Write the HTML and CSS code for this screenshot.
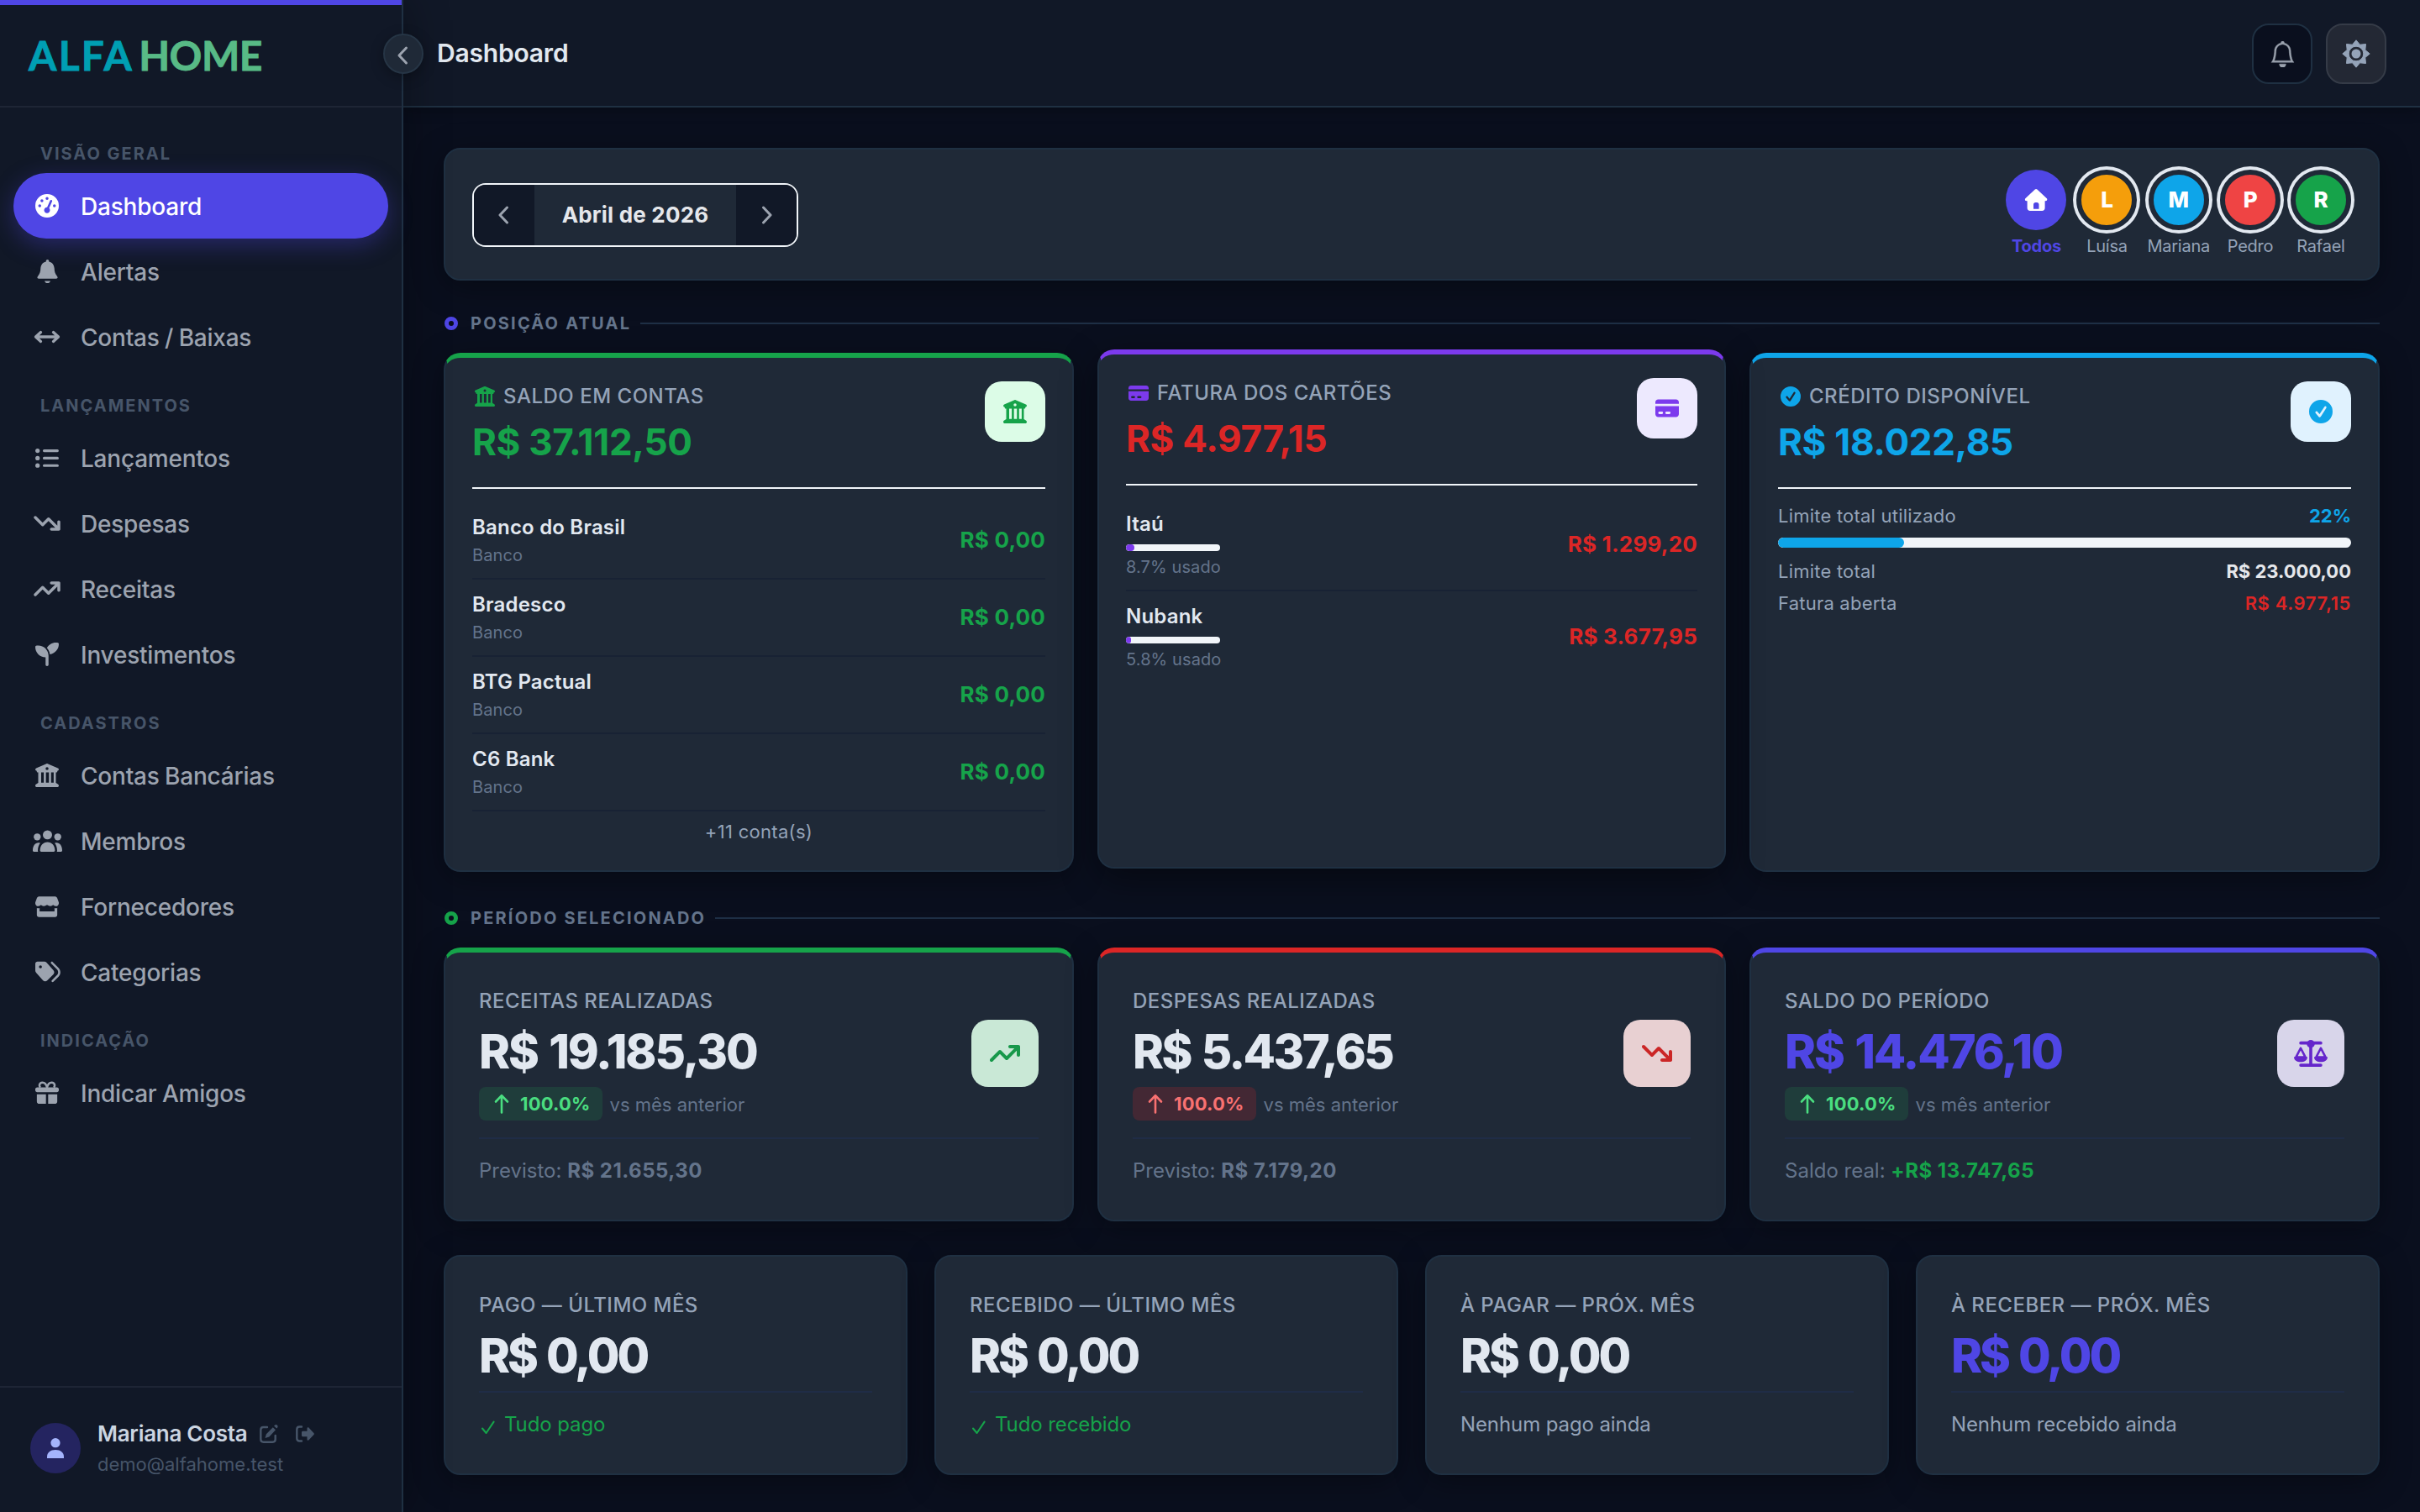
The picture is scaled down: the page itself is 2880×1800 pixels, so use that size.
FILE: index.html
```html
<!DOCTYPE html>
<html lang="pt-BR">
<head>
    <meta charset="UTF-8">
    <meta name="viewport" content="width=device-width, initial-scale=1.0">
    <title>Dashboard - AlfaHome</title>
    <link rel="stylesheet" href="styles.css">
</head>
<body>
    <!-- Icon sprite -->
    <svg class="sprite" xmlns="http://www.w3.org/2000/svg">
        <symbol id="i-gauge" viewBox="0 0 512 512"><path d="M0 256a256 256 0 1 1 512 0A256 256 0 1 1 0 256zM288 96a32 32 0 1 0 -64 0 32 32 0 1 0 64 0zM256 416c35.3 0 64-28.7 64-64c0-17.4-6.9-33.1-18.1-44.6L366 161.7c5.3-12.1-.2-26.3-12.3-31.6s-26.3 .2-31.6 12.3L257.9 288c-.6 0-1.3 0-1.9 0c-35.3 0-64 28.7-64 64s28.7 64 64 64zM176 144a32 32 0 1 0 -64 0 32 32 0 1 0 64 0zM96 288a32 32 0 1 0 0-64 32 32 0 1 0 0 64zm352-32a32 32 0 1 0 -64 0 32 32 0 1 0 64 0z"/></symbol>
        <symbol id="i-bell" viewBox="0 0 448 512"><path d="M224 0c-17.7 0-32 14.3-32 32V45C119 60 78 120 74 194c-2 70-14 106-52 158l-14 22C-6 394 8 416 32 416H416c24 0 38-22 24-42l-14-22c-38-52-50-88-52-158C370 120 329 60 256 45V32c0-17.7-14.3-32-32-32zM160 464c8 28 34 48 64 48s56-20 64-48z"/></symbol>
        <symbol id="i-leftright" viewBox="0 0 32 28"><path d="M3 14H29M8.500 8.500L2.500 14l6 5.500M23.500 8.500L29.500 14l-6 5.500" fill="none" stroke="currentColor" stroke-width="3.300" stroke-linecap="round" stroke-linejoin="round"/></symbol>
        <symbol id="i-list" viewBox="0 0 28 28"><g><circle cx="2.700" cy="5.600" r="2.600"/><circle cx="2.700" cy="14.400" r="2.600"/><circle cx="2.700" cy="23.200" r="2.600"/></g><path d="M10.500 5.600H26.400M10.500 14.400H26.400M10.500 23.200H26.400" stroke="currentColor" stroke-width="3.100" stroke-linecap="round"/></symbol>
        <symbol id="i-up" viewBox="0 0 576 512"><path d="M384 160c-17.700 0-32-14.300-32-32s14.300-32 32-32H544c17.700 0 32 14.300 32 32V288c0 17.700-14.300 32-32 32s-32-14.300-32-32V205.300L342.600 374.600c-12.500 12.500-32.800 12.500-45.300 0L192 269.300 54.600 406.600c-12.500 12.500-32.800 12.500-45.300 0s-12.500-32.800 0-45.300l160-160c12.500-12.500 32.800-12.500 45.300 0L320 306.700 466.700 160H384z"/></symbol>
        <symbol id="i-down" viewBox="0 0 576 512"><path transform="matrix(1 0 0 -1 0 512)" d="M384 160c-17.700 0-32-14.300-32-32s14.300-32 32-32H544c17.700 0 32 14.300 32 32V288c0 17.700-14.300 32-32 32s-32-14.300-32-32V205.300L342.600 374.600c-12.500 12.500-32.800 12.500-45.300 0L192 269.300 54.600 406.600c-12.500 12.500-32.800 12.500-45.300 0s-12.500-32.800 0-45.300l160-160c12.500-12.500 32.800-12.500 45.300 0L320 306.700 466.700 160H384z"/></symbol>
        <symbol id="i-seedling" viewBox="0 0 512 512"><path d="M512 32c0 113.600-84.600 207.500-194.200 222c-7.100-53.400-30.600-101.600-65.300-139.300C290.800 46.300 364 0 448 0h32c17.700 0 32 14.300 32 32zM0 96C0 78.300 14.300 64 32 64H64c123.700 0 224 100.300 224 224v32V480c0 17.700-14.300 32-32 32s-32-14.300-32-32V320C100.300 320 0 219.700 0 96z"/></symbol>
        <symbol id="i-bank" viewBox="0 0 512 512"><path d="M243.400 2.600l-224 96c-14 6-21.800 21-18.700 35.800S16.800 160 32 160v8c0 13.300 10.700 24 24 24H456c13.300 0 24-10.700 24-24v-8c15.200 0 28.300-10.700 31.300-25.600s-4.800-29.900-18.700-35.800l-224-96c-8-3.400-17.200-3.400-25.200 0zM128 192H64V420.300c-.6 .3-1.200 .7-1.800 1.100l-48 32c-11.700 7.800-17 22.400-12.900 35.900S17.900 512 32 512H480c14.100 0 26.500-9.200 30.600-22.700s-1.100-28.100-12.900-35.900l-48-32c-.6-.4-1.200-.7-1.800-1.100V192H400V416H344V192H296V416H232V192H184V416H128V192zM256 76a32 32 0 1 1 0 64 32 32 0 1 1 0-64z" fill-rule="evenodd"/></symbol>
        <symbol id="i-users" viewBox="0 0 640 512"><circle cx="320" cy="126" r="100"/><circle cx="97" cy="170" r="76"/><circle cx="543" cy="170" r="76"/><path d="M158 468c0-110 66-186 162-186s162 76 162 186c0 16-10 26-26 26H184c-16 0-26-10-26-26zM0 466C0 366 50 298 124 298c14 0 26 2 38 6-34 42-52 94-52 160 0 10 2 20 6 30H28c-16 0-28-12-28-28zM640 466c0-100-50-168-124-168-14 0-26 2-38 6 34 42 52 94 52 160 0 10-2 20-6 30h88c16 0 28-12 28-28z"/></symbol>
        <symbol id="i-store" viewBox="0 0 512 512"><path d="M90 40H422c24 0 44 12 54 32l32 88c16 48-16 92-62 92-24 0-44-10-58-26-30 32-82 34-132 0-50 34-102 32-132 0-14 16-34 26-58 26C20 252-12 208 4 160L36 72C46 52 66 40 90 40zM34 292c20 8 40 8 60 2V364H418V294c20 6 40 6 60-2V444c0 28-20 46-46 46H80c-26 0-46-18-46-46z"/></symbol>
        <symbol id="i-tags" viewBox="0 0 548 512"><path d="M378 39L505.800 168.400c52.400 53 52.400 138.200 0 191.200L393.800 472.900c-9.300 9.400-24.500 9.500-33.900 .2s-9.500-24.500-.2-33.900L471.600 325.900c33.900-34.300 33.900-89.400 0-123.700L343.900 72.900c-9.300-9.400-9.200-24.600 .2-33.900s24.600-9.200 33.900 .2zM0 229.500V80C0 53.500 21.500 32 48 32H197.500c17 0 33.300 6.700 45.300 18.700l150 168c25 25 25 65.500 0 90.500L259.300 442.700c-25 25-65.500 25-90.500 0l-150-168C6.700 262.700 0 246.500 0 229.500zM144 144a32 32 0 1 0 -64 0 32 32 0 1 0 64 0z"/></symbol>
        <symbol id="i-gift" viewBox="0 0 512 512"><path d="M256 140C240 70 200 32 156 32c-38 0-66 26-66 60 0 20 8 36 20 48M256 140C272 70 312 32 356 32c38 0 66 26 66 60 0 20-8 36-20 48" fill="none" stroke="currentColor" stroke-width="46"/><path d="M40 138H472c22 0 40 18 40 40v24c0 22-18 40-40 40H40c-22 0-40-18-40-40v-24c0-22 18-40 40-40zM34 288H232V494H86c-30 0-52-22-52-52zM280 288H478V442c0 30-22 52-52 52H280z"/></symbol>
        <symbol id="i-card" viewBox="0 0 512 512"><path d="M64 66H448c36 0 64 26 64 62v32H0V128c0-36 28-62 64-62zM0 208H512V384c0 36-28 62-64 62H64c-36 0-64-26-64-62zM88 330c-32 0-32 52 0 52h56c32 0 32-52 0-52zM242 330c-32 0-32 52 0 52h64c32 0 32-52 0-52z" fill-rule="evenodd"/></symbol>
        <symbol id="i-check" viewBox="0 0 512 512"><path fill-rule="evenodd" d="M256 512A256 256 0 1 0 256 0a256 256 0 1 0 0 512zM374 176L254 366c-10 16-32 18-44 4l-68-82c-20-26 16-56 38-32l48 56L334 150c18-26 56-2 40 26z"/></symbol>
        <symbol id="i-scale" viewBox="0 0 640 512"><g fill="none" stroke="currentColor" stroke-linecap="round" stroke-linejoin="round"><path d="M130 58H510M130 480H510" stroke-width="60"/><path d="M320 60V470" stroke-width="58" stroke-linecap="butt"/><path d="M128 156L38 330H218zM512 156L422 330H602z" stroke-width="42"/></g><circle cx="320" cy="76" r="76"/><path d="M0 322H256C256 386 198 420 128 420S0 386 0 322zM384 322H640C640 386 582 420 512 420S384 386 384 322z"/></symbol>
        <symbol id="i-home" viewBox="0 0 28 28"><path fill-rule="evenodd" d="M12.800 1.500c.8-.7 1.800-.7 2.600 0l11.200 10.600c1.400 1.300.6 3.200-1.200 3.200H24.600V23.600c0 2-1.400 3.400-3.400 3.400H7c-2 0-3.400-1.400-3.400-3.400V15.300H2.800C1 15.300.2 13.400 1.600 12.100zM11 24.800h6.500V19.600c0-1.500-1-2.500-2.500-2.500h-1.500c-1.500 0-2.500 1-2.500 2.500z"/></symbol>
        <symbol id="i-bell-o" viewBox="0 0 16 16"><path stroke="currentColor" stroke-width=".25" d="M8 16a2 2 0 0 0 2-2H6a2 2 0 0 0 2 2M8 1.918l-.797.161A4 4 0 0 0 4 6c0 .628-.134 2.197-.459 3.742-.16.767-.376 1.566-.663 2.258h10.244c-.287-.692-.502-1.490-.663-2.258C12.134 8.197 12 6.628 12 6a4 4 0 0 0-3.203-3.920zM14.220 12c.223.447.481.801.780 1H1c.299-.199.557-.553.780-1C2.680 10.200 3 6.880 3 6c0-2.420 1.720-4.440 4.005-4.901a1 1 0 1 1 1.990 0A5 5 0 0 1 13 6c0 .880.320 4.200 1.220 6"/></symbol>
        <symbol id="i-sun" viewBox="0 0 34 34"><path fill-rule="evenodd" stroke="currentColor" stroke-width="1" stroke-linejoin="round" d="M17 .8L21.500 6.200 28.500 5.500 27.800 12.500 33.200 17 27.800 21.500 28.500 28.500 21.500 27.800 17 33.200 12.500 27.800 5.500 28.500 6.200 21.500 .8 17 6.200 12.500 5.500 5.500 12.500 6.200zM17 8.200a8.800 8.800 0 1 0 0 17.600 8.800 8.800 0 1 0 0-17.600z"/><circle cx="17" cy="17" r="5.500"/></symbol>
        <symbol id="i-left" viewBox="0 0 16 24"><path d="M12.500 3L4 12l8.500 9" fill="none" stroke="currentColor" stroke-width="3" stroke-linecap="round" stroke-linejoin="round"/></symbol>
        <symbol id="i-right" viewBox="0 0 16 24"><path d="M3.500 3l8.500 9-8.500 9" fill="none" stroke="currentColor" stroke-width="3" stroke-linecap="round" stroke-linejoin="round"/></symbol>
        <symbol id="i-arrow" viewBox="0 0 20 24"><path d="M10 22.500V2.500M3 9.500L10 2.200l7 7.300" fill="none" stroke="currentColor" stroke-width="2.600" stroke-linecap="round" stroke-linejoin="round"/></symbol>
        <symbol id="i-tick" viewBox="0 0 20 20"><path d="M3 11.500L7.600 17 16.600 3.600" fill="none" stroke="currentColor" stroke-width="2.100" stroke-linecap="round" stroke-linejoin="round"/></symbol>
        <symbol id="i-ring" viewBox="0 0 16 16"><circle cx="8" cy="8" r="5.500" fill="none" stroke="currentColor" stroke-width="5"/></symbol>
        <symbol id="i-user" viewBox="0 0 20 24"><circle cx="10" cy="5.700" r="5.600"/><path d="M0 24v-1.500C0 17 4 14 10 14s10 3 10 8.500V24z"/></symbol>
        <symbol id="i-edit" viewBox="0 0 22 22"><path d="M9 3H4.500C2.600 3 1.300 4.300 1.300 6.200V17.500c0 1.900 1.300 3.200 3.200 3.200H15.500c1.900 0 3.200-1.300 3.200-3.200V13" fill="none" stroke="currentColor" stroke-width="2.400" stroke-linecap="round"/><path d="M18 .8c1-1 2.200-1 3 0s.8 2 0 3l-.8.800-3.200-3zM15.800 3.200l3.200 3-7.600 8.300-4.900 1.500 1.400-4.700z"/></symbol>
        <symbol id="i-exit" viewBox="0 0 22 22"><path d="M7 2.500H4.500C2.600 2.500 1.300 3.800 1.300 5.700V16.300c0 1.900 1.300 3.200 3.200 3.200H7" fill="none" stroke="currentColor" stroke-width="2.400" stroke-linecap="round"/><path d="M13.500 4.600c0-1.300 1.200-1.800 2.100-.9l5.800 6.200c.6.700.6 1.500 0 2.200l-5.800 6.200c-.9.900-2.100.4-2.100-.9V14.200H8.500c-1 0-1.500-.6-1.500-1.500V9.300c0-.9.500-1.500 1.500-1.500h5z"/></symbol>
    </svg>

    <div class="layout">
        <aside class="sidebar">
            <div class="brand"><span class="brand-a">ALFA</span><span class="brand-b">HOME</span></div>
            <nav class="nav">
                <div class="nav-label">VISÃO GERAL</div>
                <a class="nav-item active"><span class="nav-icon"><svg width="28" height="28"><use href="#i-gauge"/></svg></span><span>Dashboard</span></a>
                <a class="nav-item"><span class="nav-icon"><svg width="25" height="28"><use href="#i-bell"/></svg></span><span>Alertas</span></a>
                <a class="nav-item"><span class="nav-icon"><svg width="32" height="28"><use href="#i-leftright"/></svg></span><span>Contas / Baixas</span></a>
                <div class="nav-label">LANÇAMENTOS</div>
                <a class="nav-item"><span class="nav-icon"><svg width="28" height="28"><use href="#i-list"/></svg></span><span>Lançamentos</span></a>
                <a class="nav-item"><span class="nav-icon"><svg width="32" height="28"><use href="#i-down"/></svg></span><span>Despesas</span></a>
                <a class="nav-item"><span class="nav-icon"><svg width="32" height="28"><use href="#i-up"/></svg></span><span>Receitas</span></a>
                <a class="nav-item"><span class="nav-icon"><svg width="28" height="28"><use href="#i-seedling"/></svg></span><span>Investimentos</span></a>
                <div class="nav-label">CADASTROS</div>
                <a class="nav-item"><span class="nav-icon"><svg width="28" height="28"><use href="#i-bank"/></svg></span><span>Contas Bancárias</span></a>
                <a class="nav-item"><span class="nav-icon"><svg width="35" height="28"><use href="#i-users"/></svg></span><span>Membros</span></a>
                <a class="nav-item"><span class="nav-icon"><svg width="28" height="28"><use href="#i-store"/></svg></span><span>Fornecedores</span></a>
                <a class="nav-item"><span class="nav-icon tags"><svg width="30" height="28"><use href="#i-tags"/></svg></span><span>Categorias</span></a>
                <div class="nav-label">INDICAÇÃO</div>
                <a class="nav-item"><span class="nav-icon"><svg width="28" height="28"><use href="#i-gift"/></svg></span><span>Indicar Amigos</span></a>
            </nav>
            <div class="user">
                <div class="user-avatar"><svg width="20" height="24"><use href="#i-user"/></svg></div>
                <div>
                    <div class="user-name">Mariana Costa
                        <svg width="22" height="22"><use href="#i-edit"/></svg>
                        <svg width="22" height="22"><use href="#i-exit"/></svg>
                    </div>
                    <div class="user-mail">demo@alfahome.test</div>
                </div>
            </div>
            <button class="collapse"><svg width="16" height="24"><use href="#i-left"/></svg></button>
        </aside>

        <div class="page">
            <header class="topbar">
                <h1>Dashboard</h1>
                <div class="topbar-actions">
                    <button class="icon-btn"><svg width="31" height="31"><use href="#i-bell-o"/></svg></button>
                    <button class="icon-btn theme"><svg width="34" height="34"><use href="#i-sun"/></svg></button>
                </div>
            </header>

            <main class="content">
                <section class="filters">
                    <div class="month">
                        <button class="prev"><svg width="16" height="24"><use href="#i-left"/></svg></button>
                        <span>Abril de 2026</span>
                        <button class="next"><svg width="16" height="24"><use href="#i-right"/></svg></button>
                    </div>
                    <div class="members">
                        <div class="member all"><div class="avatar"><svg width="28" height="28"><use href="#i-home"/></svg></div><span>Todos</span></div>
                        <div class="member"><div class="avatar orange">L</div><span>Luísa</span></div>
                        <div class="member"><div class="avatar sky">M</div><span>Mariana</span></div>
                        <div class="member"><div class="avatar red">P</div><span>Pedro</span></div>
                        <div class="member"><div class="avatar green">R</div><span>Rafael</span></div>
                    </div>
                </section>

                <div class="section-label"><svg class="c-indigo" width="16" height="16"><use href="#i-ring"/></svg>POSIÇÃO ATUAL</div>

                <section class="grid-3 position">
                    <div class="card top-green">
                        <div class="card-head">
                            <div>
                                <div class="card-title"><span class="c-green"><svg width="24" height="24"><use href="#i-bank"/></svg></span>SALDO EM CONTAS</div>
                                <div class="card-value c-green">R$ 37.112,50</div>
                            </div>
                            <div class="tile tile-green"><svg width="28" height="28"><use href="#i-bank"/></svg></div>
                        </div>
                        <div class="row"><div><div class="row-name">Banco do Brasil</div><div class="row-sub">Banco</div></div><div class="row-value c-green">R$ 0,00</div></div>
                        <div class="row"><div><div class="row-name">Bradesco</div><div class="row-sub">Banco</div></div><div class="row-value c-green">R$ 0,00</div></div>
                        <div class="row"><div><div class="row-name">BTG Pactual</div><div class="row-sub">Banco</div></div><div class="row-value c-green">R$ 0,00</div></div>
                        <div class="row"><div><div class="row-name">C6 Bank</div><div class="row-sub">Banco</div></div><div class="row-value c-green">R$ 0,00</div></div>
                        <div class="more">+11 conta(s)</div>
                    </div>

                    <div class="card top-violet raised">
                        <div class="card-head">
                            <div>
                                <div class="card-title"><span class="c-violet"><svg width="24" height="24"><use href="#i-card"/></svg></span>FATURA DOS CARTÕES</div>
                                <div class="card-value c-red">R$ 4.977,15</div>
                            </div>
                            <div class="tile tile-violet"><svg width="28" height="28"><use href="#i-card"/></svg></div>
                        </div>
                        <div class="row">
                            <div><div class="row-name">Itaú</div><div class="mini-bar"><div style="width: 8.7%"></div></div><div class="row-sub">8.7% usado</div></div>
                            <div class="row-value c-red">R$ 1.299,20</div>
                        </div>
                        <div class="row">
                            <div><div class="row-name">Nubank</div><div class="mini-bar"><div style="width: 5.8%"></div></div><div class="row-sub">5.8% usado</div></div>
                            <div class="row-value c-red">R$ 3.677,95</div>
                        </div>
                    </div>

                    <div class="card top-sky">
                        <div class="card-head">
                            <div>
                                <div class="card-title"><span class="c-sky"><svg width="24" height="24"><use href="#i-check"/></svg></span>CRÉDITO DISPONÍVEL</div>
                                <div class="card-value c-sky">R$ 18.022,85</div>
                            </div>
                            <div class="tile tile-sky"><svg width="28" height="28"><use href="#i-check"/></svg></div>
                        </div>
                        <div class="limit">
                            <div class="limit-row"><span>Limite total utilizado</span><b class="c-sky">22%</b></div>
                            <div class="limit-bar"><div style="width: 22%"></div></div>
                            <div class="limit-row"><span>Limite total</span><b>R$ 23.000,00</b></div>
                            <div class="limit-row"><span>Fatura aberta</span><b class="c-red semi">R$ 4.977,15</b></div>
                        </div>
                    </div>
                </section>

                <div class="section-label period-label"><svg class="c-green" width="16" height="16"><use href="#i-ring"/></svg>PERÍODO SELECIONADO</div>

                <section class="grid-3">
                    <div class="stat top-green">
                        <div class="stat-head">
                            <div>
                                <div class="stat-title">RECEITAS REALIZADAS</div>
                                <div class="stat-value">R$ 19.185,30</div>
                                <div class="trend"><span class="badge"><svg width="20" height="24"><use href="#i-arrow"/></svg>100.0%</span><span class="vs">vs mês anterior</span></div>
                            </div>
                            <div class="tile-lg lg-green"><svg width="36" height="32"><use href="#i-up"/></svg></div>
                        </div>
                        <div class="stat-foot">Previsto: <b>R$ 21.655,30</b></div>
                    </div>
                    <div class="stat top-red">
                        <div class="stat-head">
                            <div>
                                <div class="stat-title">DESPESAS REALIZADAS</div>
                                <div class="stat-value">R$ 5.437,65</div>
                                <div class="trend"><span class="badge bad"><svg width="20" height="24"><use href="#i-arrow"/></svg>100.0%</span><span class="vs">vs mês anterior</span></div>
                            </div>
                            <div class="tile-lg lg-red"><svg width="36" height="32"><use href="#i-down"/></svg></div>
                        </div>
                        <div class="stat-foot">Previsto: <b>R$ 7.179,20</b></div>
                    </div>
                    <div class="stat top-indigo">
                        <div class="stat-head">
                            <div>
                                <div class="stat-title">SALDO DO PERÍODO</div>
                                <div class="stat-value c-indigo">R$ 14.476,10</div>
                                <div class="trend"><span class="badge"><svg width="20" height="24"><use href="#i-arrow"/></svg>100.0%</span><span class="vs">vs mês anterior</span></div>
                            </div>
                            <div class="tile-lg lg-violet"><svg width="40" height="32"><use href="#i-scale"/></svg></div>
                        </div>
                        <div class="stat-foot">Saldo real: <b class="c-green">+R$ 13.747,65</b></div>
                    </div>
                </section>

                <section class="grid-4">
                    <div class="stat">
                        <div class="stat-title">PAGO — ÚLTIMO MÊS</div>
                        <div class="stat-value">R$ 0,00</div>
                        <div class="stat-foot note c-green"><svg width="20" height="20"><use href="#i-tick"/></svg>Tudo pago</div>
                    </div>
                    <div class="stat">
                        <div class="stat-title">RECEBIDO — ÚLTIMO MÊS</div>
                        <div class="stat-value">R$ 0,00</div>
                        <div class="stat-foot note c-green"><svg width="20" height="20"><use href="#i-tick"/></svg>Tudo recebido</div>
                    </div>
                    <div class="stat">
                        <div class="stat-title">À PAGAR — PRÓX. MÊS</div>
                        <div class="stat-value">R$ 0,00</div>
                        <div class="stat-foot note">Nenhum pago ainda</div>
                    </div>
                    <div class="stat">
                        <div class="stat-title">À RECEBER — PRÓX. MÊS</div>
                        <div class="stat-value c-indigo">R$ 0,00</div>
                        <div class="stat-foot note">Nenhum recebido ainda</div>
                    </div>
                </section>
            </main>
        </div>
    </div>
</body>
</html>
```

FILE: styles.css
```css
:root {
    --bg: #0a0f1e;
    --panel: #111827;
    --card: #1f2937;
    --line: #1f3042;
    --text: #e2e8f0;
    --muted: #94a3b8;
    --dim: #64748b;
    --indigo: #4f46e5;
    --green: #16a34a;
    --red: #dc2626;
    --violet: #7c3aed;
    --sky: #0ea5e9;
}

* {
    margin: 0;
    padding: 0;
    box-sizing: border-box;
}

body {
    background: var(--bg);
    color: var(--text);
    font-family: 'Inter', sans-serif;
    font-size: 24px;
    line-height: 1.5;
    overflow: hidden;
}

button {
    font: inherit;
    border: none;
    background: none;
    color: inherit;
}

svg {
    display: block;
    flex: none;
    fill: currentColor;
}

.sprite {
    position: absolute;
    width: 0;
    height: 0;
}

.layout {
    display: flex;
    height: 1800px;
}

/* Sidebar */
.sidebar {
    position: relative;
    z-index: 2;
    display: flex;
    flex-direction: column;
    width: 480px;
    flex: none;
    background: var(--panel);
    border-right: 2px solid var(--line);
    box-shadow: 4px 0 48px rgba(0, 0, 0, 0.3);
}

.brand {
    display: flex;
    gap: 6px;
    height: 128px;
    padding: 0 0 1px 34px;
    align-items: center;
    border-top: 6px solid var(--indigo);
    border-bottom: 2px solid #1e2535;
    font-family: 'Lato', sans-serif;
    font-size: 48px;
    font-weight: 700;
    line-height: 1;
    -webkit-text-stroke: 0.8px currentColor;
}

.brand-a {
    color: #009fb3;
    letter-spacing: 2.3px;
}

.brand-b {
    color: #58ba86;
    letter-spacing: -0.5px;
}

.nav {
    flex: 1;
    padding: 12px 16px 0;
}

.nav-label {
    margin: 28px 0 8px 32px;
    color: #475569;
    font-size: 20px;
    font-weight: 700;
    line-height: 30px;
    letter-spacing: 2px;
}

.nav-item {
    display: flex;
    align-items: center;
    height: 78px;
    padding-left: 20px;
    border-radius: 40px;
    color: #9ca3af;
    font-size: 28px;
    font-weight: 500;
    letter-spacing: -0.22px;
    word-spacing: -0.8px;
}

.nav-item span:last-child {
    padding-top: 2px;
}

.nav-item.active {
    background: var(--indigo);
    color: #fff;
    box-shadow: 0 8px 28px rgba(79, 70, 229, 0.35);
}

.nav-icon {
    display: flex;
    justify-content: center;
    width: 40px;
    margin-right: 20px;
}

.nav-icon.tags {
    padding-left: 2px;
}

.user {
    display: flex;
    align-items: center;
    gap: 20px;
    height: 150px;
    padding: 0 36px 4px;
    border-top: 2px solid #1e2535;
}

.user-avatar {
    display: flex;
    align-items: center;
    justify-content: center;
    width: 60px;
    height: 60px;
    border-radius: 50%;
    background: #242460;
    color: #a5b4fc;
}

.user-name {
    display: flex;
    align-items: center;
    color: #cbd5e1;
    font-size: 26px;
    font-weight: 600;
    line-height: 38px;
    letter-spacing: -0.28px;
}

.user-name svg {
    margin-left: 15px;
    color: #475569;
}

.user-name svg + svg {
    margin-left: 21px;
}

.user-mail {
    color: #475569;
    font-size: 22px;
    line-height: 34px;
}

.collapse {
    position: absolute;
    top: 40px;
    right: -26px;
    display: flex;
    align-items: center;
    justify-content: center;
    width: 48px;
    height: 48px;
    padding: 3px 2px 0 0;
    border: 2px solid #263545;
    border-radius: 50%;
    background: var(--card);
    color: #9ca3af;
    box-shadow: 0 4px 16px rgba(0, 0, 0, 0.3);
}

/* Top bar */
.page {
    flex: 1;
    min-width: 0;
}

.topbar {
    display: flex;
    align-items: center;
    justify-content: space-between;
    height: 128px;
    padding: 0 40px;
    background: var(--panel);
    border-bottom: 2px solid var(--line);
    box-shadow: 0 2px 16px rgba(0, 0, 0, 0.3);
}

.topbar h1 {
    font-size: 30px;
    font-weight: 600;
    letter-spacing: -0.2px;
}

.topbar-actions {
    display: flex;
    gap: 16px;
    padding-top: 2px;
}

.icon-btn {
    display: flex;
    align-items: center;
    justify-content: center;
    width: 72px;
    height: 72px;
    border: 2px solid var(--line);
    border-radius: 20px;
    background: var(--bg);
    color: #9ca3af;
}

.icon-btn.theme {
    border-color: #353b47;
    background: #232834;
    color: var(--muted);
}

.content {
    padding: 48px;
}

/* Filters */
.filters,
.card,
.stat {
    background: var(--card);
    border: 2px solid var(--line);
    border-radius: 20px;
    box-shadow: 0 8px 36px rgba(0, 0, 0, 0.34);
}

.filters {
    display: flex;
    align-items: center;
    justify-content: space-between;
    height: 158px;
    padding: 0 32px;
}

.month {
    display: flex;
    height: 76px;
    margin-top: 2px;
    border: 2px solid #f1f5f9;
    border-radius: 16px;
    overflow: hidden;
}

.month button {
    display: flex;
    align-items: center;
    justify-content: center;
    width: 72px;
    background: var(--panel);
    color: #9ca3af;
}

.month .prev {
    padding-right: 3px;
}

.month .next {
    padding-left: 2px;
}

.month span {
    width: 240px;
    color: #e5e7eb;
    font-size: 26px;
    font-weight: 700;
    line-height: 72px;
    letter-spacing: 0.2px;
    text-align: center;
}

.members {
    display: flex;
    gap: 12px;
}

.member {
    display: flex;
    flex-direction: column;
    align-items: center;
    gap: 4px;
    min-width: 72px;
    color: var(--muted);
    font-size: 20px;
    line-height: 30px;
    letter-spacing: -0.25px;
}

.member.all {
    color: var(--indigo);
    font-weight: 700;
}

.avatar {
    display: flex;
    align-items: center;
    justify-content: center;
    width: 72px;
    height: 72px;
    border: 6px solid var(--card);
    border-radius: 50%;
    box-shadow: 0 0 0 4px #e2e8f0;
    color: #fff;
    font-size: 26px;
    font-weight: 800;
}

.all .avatar {
    border: none;
    background: var(--indigo);
    box-shadow: none;
}

.orange { background: #f59e0b; }
.sky { background: var(--sky); }
.red { background: #ef4444; }
.green { background: var(--green); }

/* Section labels */
.section-label {
    display: flex;
    align-items: center;
    margin: 36px 0 20px;
    color: var(--dim);
    font-size: 20px;
    font-weight: 700;
    line-height: 30px;
    letter-spacing: 2.2px;
}

.section-label svg {
    margin: 0 15px 0 1px;
}

.section-label::after {
    content: '';
    flex: 1;
    height: 2px;
    margin-left: 11px;
    background: #1e2f45;
}

.period-label {
    margin-top: 40px;
}

.grid-3 {
    display: grid;
    grid-template-columns: 750fr 748fr 750fr;
    gap: 28px;
}

.grid-4 {
    display: grid;
    grid-template-columns: repeat(4, 1fr);
    gap: 32px;
    margin-top: 40px;
}

/* Position cards */
.card {
    height: 618px;
    padding: 28px 32px;
}

.card.raised {
    transform: translateY(-4px);
    box-shadow: 0 12px 44px rgba(0, 0, 0, 0.45);
}

.card-head {
    display: flex;
    justify-content: space-between;
    height: 128px;
    margin-bottom: 16px;
    border-bottom: 2px solid #f1f5f9;
}

.card-title {
    display: flex;
    align-items: center;
    color: var(--muted);
    font-weight: 500;
    line-height: 36px;
    letter-spacing: 0.52px;
}

.card-title span {
    display: flex;
    justify-content: center;
    width: 30px;
    margin-right: 7px;
}

.card-value {
    margin-top: 6px;
    font-size: 44px;
    font-weight: 700;
    line-height: 60px;
    letter-spacing: -0.3px;
}

.tile {
    display: flex;
    align-items: center;
    justify-content: center;
    width: 72px;
    height: 72px;
    border-radius: 20px;
}

.tile-green { background: #dcfce7; color: var(--green); }
.tile-violet { background: #ede9fe; color: var(--violet); }
.tile-sky { background: #e0f2fe; color: var(--sky); }

.row {
    display: flex;
    align-items: center;
    justify-content: space-between;
    padding: 12px 0;
    border-bottom: 2px solid #182234;
}

.raised .row:last-child {
    border-bottom: none;
}

.row-name {
    font-weight: 600;
    line-height: 36px;
    letter-spacing: 0.2px;
}

.row-sub {
    color: var(--dim);
    font-size: 20px;
    line-height: 30px;
    letter-spacing: 0.1px;
}

.row-value {
    padding-bottom: 1px;
    font-size: 26px;
    font-weight: 700;
    letter-spacing: 0.2px;
}

.mini-bar {
    width: 112px;
    height: 8px;
    margin: 6px 0 4px;
    border-radius: 4px;
    background: #f1f5f9;
    overflow: hidden;
}

.mini-bar div {
    height: 100%;
    border-radius: 4px;
    background: var(--violet);
}

.more {
    margin-top: 8px;
    color: var(--muted);
    font-size: 22px;
    letter-spacing: 0.3px;
    text-align: center;
}

.limit-row {
    display: flex;
    justify-content: space-between;
    margin-bottom: 5px;
    color: var(--muted);
    font-size: 22px;
    line-height: 33px;
}

.limit-row span {
    letter-spacing: 0.22px;
}

.limit-row b {
    color: #e5e7eb;
    font-weight: 700;
}

.limit-row b.semi {
    font-weight: 600;
    letter-spacing: 0.6px;
}

.limit-bar {
    height: 12px;
    margin: 9px 0 12px;
    border-radius: 6px;
    background: #f1f5f9;
    overflow: hidden;
}

.limit-bar div {
    height: 100%;
    border-radius: 6px;
    background: var(--sky);
}

/* Stat cards */
.stat {
    padding: 40px;
}

.stat-head {
    display: flex;
    align-items: center;
    justify-content: space-between;
    margin-bottom: 20px;
}

.stat-title {
    color: var(--muted);
    font-weight: 500;
    line-height: 36px;
    letter-spacing: 0.48px;
}

.stat-value {
    margin: 8px 0;
    font-size: 56px;
    font-weight: 800;
    line-height: 68px;
    letter-spacing: -2.05px;
    word-spacing: 3px;
}

.top-red .stat-value {
    letter-spacing: -2.55px;
}

.grid-4 .stat-value {
    letter-spacing: -3.1px;
}

.trend {
    display: flex;
    align-items: center;
    gap: 9px;
    color: var(--dim);
    font-size: 22px;
}

.trend .vs {
    padding-top: 3px;
}

.badge {
    display: flex;
    align-items: center;
    gap: 12px;
    height: 40px;
    padding: 0 14px 0 17px;
    border-radius: 8px;
    background: #1f3d3b;
    color: #4ade80;
    font-weight: 700;
    letter-spacing: 0.2px;
}

.badge.bad {
    background: #432834;
    color: #f87171;
}

.tile-lg {
    display: flex;
    align-items: center;
    justify-content: center;
    width: 80px;
    height: 80px;
    border-radius: 20px;
}

.lg-green { background: #c9e8d6; color: #17984a; }
.lg-red { background: #e8d0d2; color: #cb2626; }
.lg-violet { background: #d8d5ea; color: #6526cb; }

.stat-foot {
    padding-top: 20px;
    border-top: 2px solid #1f2c46;
    color: var(--dim);
    line-height: 36px;
}

.stat-foot b {
    letter-spacing: 0.5px;
}

.note {
    display: flex;
    align-items: center;
    color: var(--muted);
    letter-spacing: -0.1px;
}

.note svg {
    margin: 6px 9px 0 1px;
}

/* Colours */
.top-green { border-top: 6px solid var(--green); }
.top-violet { border-top: 6px solid var(--violet); }
.top-sky { border-top: 6px solid var(--sky); }
.top-red { border-top: 6px solid var(--red); }
.top-indigo { border-top: 6px solid var(--indigo); }

.c-green, .limit-row .c-green { color: var(--green); }
.c-red, .limit-row .c-red { color: var(--red); }
.c-violet { color: var(--violet); }
.c-sky, .limit-row .c-sky { color: var(--sky); }
.c-indigo { color: var(--indigo); }
```
